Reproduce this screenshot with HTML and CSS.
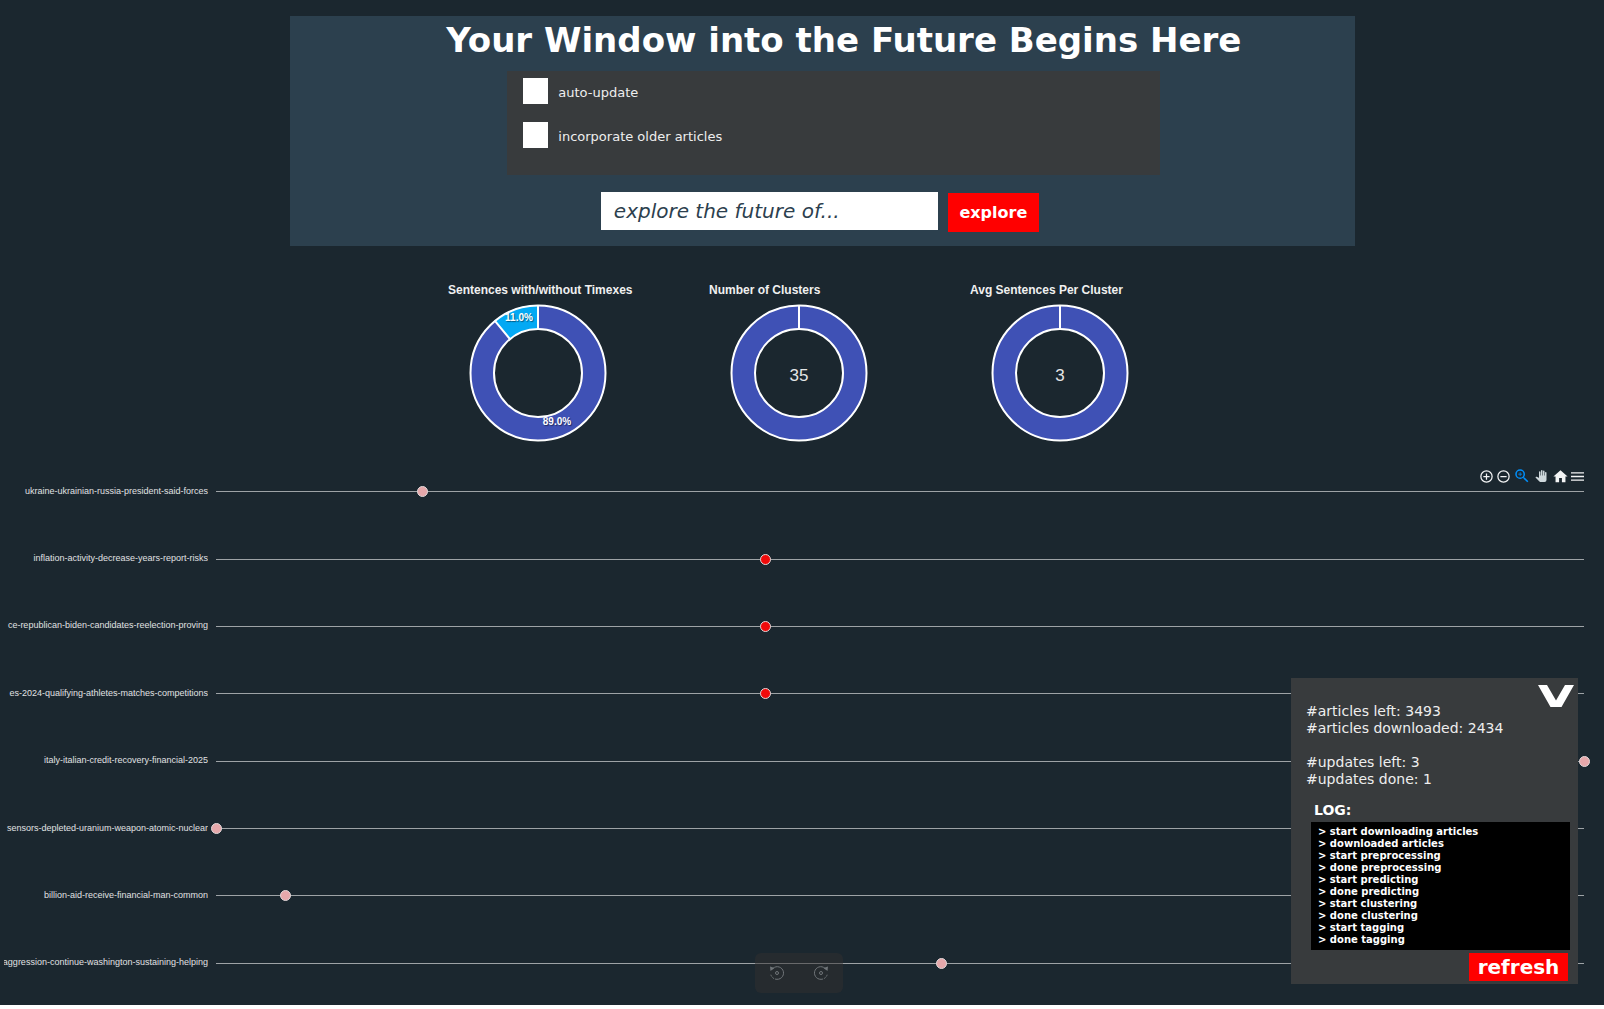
FILE: index.html
```
<!DOCTYPE html>
<html lang="en">
<head>
<meta charset="utf-8">
<title>Future Explorer</title>
<link rel="stylesheet" href="styles.css">
</head>
<body>
<div class="page">
<header class="hero">
  <h1 class="hero-title">Your Window into the Future Begins Here</h1>
  <div class="options">
    <label class="option"><input class="option-box" type="checkbox"><span>auto-update</span></label>
    <label class="option"><input class="option-box" type="checkbox"><span>incorporate older articles</span></label>
  </div>
  <form class="search">
    <input class="search-input" type="text" placeholder="explore the future of..." aria-label="explore the future of">
    <button class="search-button" type="button">explore</button>
  </form>
</header>

<main>
  <section class="stats">
    <figure class="stat">
      <figcaption class="stat-title">Sentences with/without Timexes</figcaption>
      <svg class="donut" viewBox="0 0 180 140">
        <circle class="ring" cx="90" cy="70" r="56"/>
        <path class="slice" d="M90 70 L46.7 17.6 A68 68 0 0 1 90 2 Z"/>
        <circle class="edge" cx="90" cy="70" r="67.500"/>
        <circle class="hole" cx="90" cy="70" r="44"/>
        <path class="cut" d="M90 26V2M61.9 36L46.7 17.6"/>
        <text class="pct" x="71" y="18">11.0%</text>
        <text class="pct" x="109" y="122">89.0%</text>
      </svg>
    </figure>
    <figure class="stat">
      <figcaption class="stat-title">Number of Clusters</figcaption>
      <svg class="donut" viewBox="0 0 180 140">
        <circle class="ring" cx="90" cy="70" r="56"/>
        <circle class="edge" cx="90" cy="70" r="67.500"/>
        <circle class="hole" cx="90" cy="70" r="44"/>
        <path class="cut" d="M90 26V2"/>
        <text class="total" x="90" y="78">35</text>
      </svg>
    </figure>
    <figure class="stat">
      <figcaption class="stat-title">Avg Sentences Per Cluster</figcaption>
      <svg class="donut" viewBox="0 0 180 140">
        <circle class="ring" cx="90" cy="70" r="56"/>
        <circle class="edge" cx="90" cy="70" r="67.500"/>
        <circle class="hole" cx="90" cy="70" r="44"/>
        <path class="cut" d="M90 26V2"/>
        <text class="total" x="90" y="78">3</text>
      </svg>
    </figure>
  </section>

  <section class="timeline">
    <div class="toolbar">
      <button class="tool tool-round" type="button" aria-label="Zoom in"><svg viewBox="0 0 24 24"><path d="M13 7h-2v4H7v2h4v4h2v-4h4v-2h-4V7zm-1-5a10 10 0 1 0 0 20 10 10 0 0 0 0-20zm0 18a8 8 0 1 1 0-16 8 8 0 0 1 0 16z"/></svg></button>
      <button class="tool tool-round" type="button" aria-label="Zoom out"><svg viewBox="0 0 24 24"><path d="M7 11v2h10v-2H7zm5-9a10 10 0 1 0 0 20 10 10 0 0 0 0-20zm0 18a8 8 0 1 1 0-16 8 8 0 0 1 0 16z"/></svg></button>
      <button class="tool tool-active" type="button" aria-label="Selection zoom"><svg viewBox="0 0 24 24"><path d="M15.500 14h-.79l-.28-.27A6.470 6.470 0 0 0 16 9.500 6.500 6.500 0 1 0 9.500 16c1.610 0 3.090-.59 4.230-1.570l.27.28v.79l5 4.990L20.490 19l-4.990-5zm-6 0a4.500 4.500 0 1 1 0-9 4.500 4.500 0 0 1 0 9zM12 10h-2v2H9v-2H7V9h2V7h1v2h2v1z"/></svg></button>
      <button class="tool tool-pan" type="button" aria-label="Panning"><svg viewBox="0 0 24 24"><path d="M23 5.500V20a4 4 0 0 1-4 4h-7.300a4 4 0 0 1-2.850-1.190L1 14.830s1.260-1.230 1.300-1.250c.22-.19.49-.29.79-.29.220 0 .42.060.6.160.040.010 4.310 2.460 4.310 2.460V4a1.500 1.500 0 0 1 3 0v7h1V1.500a1.500 1.500 0 0 1 3 0V11h1V2.500a1.500 1.500 0 0 1 3 0V11h1V5.500a1.500 1.500 0 0 1 3 0z"/></svg></button>
      <button class="tool tool-home" type="button" aria-label="Reset zoom"><svg viewBox="0 0 24 24"><path d="M10 20v-6h4v6h5v-8h3L12 3 2 12h3v8z"/></svg></button>
      <button class="tool tool-menu" type="button" aria-label="Menu"><svg viewBox="3 3 18 18"><path d="M3 18h18v-2H3v2zm0-5h18v-2H3v2zm0-7v2h18V6H3z"/></svg></button>
    </div>
    <ul class="rows">
      <li class="row"><span class="label">ukraine-ukrainian-russia-president-said-forces</span><span class="track"><i class="dot" style="left:15.050%"></i></span></li>
      <li class="row"><span class="label">inflation-activity-decrease-years-report-risks</span><span class="track"><i class="dot dot-hot" style="left:40.100%"></i></span></li>
      <li class="row"><span class="label">ce-republican-biden-candidates-reelection-proving</span><span class="track"><i class="dot dot-hot" style="left:40.100%"></i></span></li>
      <li class="row"><span class="label">es-2024-qualifying-athletes-matches-competitions</span><span class="track"><i class="dot dot-hot" style="left:40.100%"></i></span></li>
      <li class="row"><span class="label">italy-italian-credit-recovery-financial-2025</span><span class="track"><i class="dot" style="left:100%"></i></span></li>
      <li class="row"><span class="label">sensors-depleted-uranium-weapon-atomic-nuclear</span><span class="track"><i class="dot" style="left:0%"></i></span></li>
      <li class="row"><span class="label">billion-aid-receive-financial-man-common</span><span class="track"><i class="dot" style="left:5.080%"></i></span></li>
      <li class="row"><span class="label">aggression-continue-washington-sustaining-helping</span><span class="track"><i class="dot" style="left:53.030%"></i></span></li>
    </ul>
  </section>
</main>
</div>

<div class="rotate-bar">
  <button class="rotate" type="button" aria-label="Rotate left"><svg viewBox="0 0 16 16"><path class="arc" d="M3 4.500A6.300 6.300 0 1 1 8 14.300"/><path class="arc dashes" d="M8 14.300A6.300 6.300 0 0 1 1.700 9"/><circle class="arc" cx="8" cy="8" r="1.500"/><path class="head" d="M1 1.500L5.500 3 1.500 6z"/></svg></button>
  <button class="rotate" type="button" aria-label="Rotate right"><svg viewBox="0 0 16 16"><path class="arc" d="M13 4.500A6.300 6.300 0 1 0 8 14.300"/><path class="arc dashes" d="M8 14.300A6.300 6.300 0 0 0 14.300 9"/><circle class="arc" cx="8" cy="8" r="1.500"/><path class="head" d="M15 1.500L10.500 3 14.500 6z"/></svg></button>
</div>

<aside class="panel">
  <button class="collapse" type="button" aria-label="Collapse"><svg viewBox="0 0 36 22"><path d="M0 0H9L18 15.500 27 0H36L23.500 22H12.500z"/></svg></button>
  <p class="counts">#articles left: 3493<br>#articles downloaded: 2434</p>
  <p class="counts">#updates left: 3<br>#updates done: 1</p>
  <h2 class="log-title">LOG:</h2>
  <ul class="log">
    <li>&gt; start downloading articles</li>
    <li>&gt; downloaded articles</li>
    <li>&gt; start preprocessing</li>
    <li>&gt; done preprocessing</li>
    <li>&gt; start predicting</li>
    <li>&gt; done predicting</li>
    <li>&gt; start clustering</li>
    <li>&gt; done clustering</li>
    <li>&gt; start tagging</li>
    <li>&gt; done tagging</li>
  </ul>
  <button class="refresh" type="button">refresh</button>
</aside>
</body>
</html>
```
FILE: styles.css
```
* { box-sizing: border-box; }

html { background: #fff; }

body {
  margin: 0;
  color: #fff;
  font-family: "DejaVu Sans", sans-serif;
}

.page {
  min-height: calc(100vh - 4px);
  padding-top: 16px;
  background: #1b272f;
}

button { border: 0; padding: 0; cursor: pointer; font-family: inherit; }

/* Search header */
.hero {
  display: flex;
  flex-direction: column;
  align-items: center;
  width: 66.400%;
  height: 230px;
  margin-left: 18.100%;
  padding-left: 42px;
  background: #2c404e;
}
.hero-title { margin: 0; font-size: 34px; line-height: 48px; white-space: nowrap; }
.options {
  display: flex;
  flex-direction: column;
  gap: 18px;
  align-self: stretch;
  margin: 7px 195px 0 175px;
  height: 104px;
  padding: 7px 16px;
  background: #383b3d;
}
.option { display: flex; align-items: center; gap: 10px; height: 26px; font-size: 13px; color: #eee; }
.option span { padding-top: 3px; }
.option-box { appearance: none; width: 25px; height: 26px; margin: 0; background: #fff; }
.search { display: flex; align-items: center; gap: 10px; margin-top: 14px; margin-right: 48px; }
.search-input {
  width: 337px;
  height: 38px;
  padding: 0 13px;
  border: 0;
  border-radius: 0;
  background: #fff;
  color: #2c404e;
  font: italic 20px "DejaVu Sans", sans-serif;
}
.search-input::placeholder { color: #2c404e; opacity: 1; }
.search-button {
  width: 91px;
  height: 39px;
  margin-top: 4px;
  background: #f00;
  color: #fff;
  font-size: 16px;
  font-weight: bold;
}

/* Donut charts */
.stats { display: flex; justify-content: center; gap: 81px; padding: 36px 6px 0 0; }
.stat { width: 180px; margin: 0; }
.stat-title {
  height: 21px;
  font: bold 12px/16px "Liberation Sans", Arial, sans-serif;
  white-space: nowrap;
  color: #f0f0f0;
}
.donut { display: block; width: 180px; height: 140px; overflow: visible; font-family: "Liberation Sans", Arial, sans-serif; }
.ring { fill: none; stroke: #3f51b5; stroke-width: 24px; }
.slice { fill: #03a9f4; }
.edge { fill: none; stroke: #fff; stroke-width: 2px; }
.hole { fill: #1b272f; stroke: #fff; stroke-width: 2px; }
.cut { fill: none; stroke: #fff; stroke-width: 2px; }
.pct { fill: #fff; font-size: 10px; font-weight: bold; text-anchor: middle; text-shadow: 1px 1px 1px rgba(0, 0, 0, .45); }
.total { fill: #e4e6e7; font-size: 17px; text-anchor: middle; }

/* Timeline */
.timeline { position: relative; padding: 15px 20px 0 4px; }
.toolbar { position: absolute; top: 23px; right: 19px; display: flex; height: 20px; align-items: center; }
.tool {
  display: flex;
  justify-content: center;
  align-items: center;
  width: 20px;
  height: 20px;
  background: none;
  color: #f3f4f5;
}
.tool svg { flex: none; width: 17px; height: 17px; fill: currentColor; }
.tool-round { width: 17px; }
.tool-round svg { width: 15px; height: 15px; }
.tool-active { color: #008ffb; }
.tool-active svg { width: 18px; height: 18px; }
.tool-pan { width: 18px; color: #cfd8dc; }
.tool-pan svg { width: 12px; height: 12px; }
.tool-menu { width: 15px; }
.tool-menu svg { width: 13px; height: 13px; }
.rows { margin: 0; padding: 0; list-style: none; }
.row {
  display: grid;
  grid-template-columns: 204px 1fr;
  column-gap: 8px;
  align-items: center;
  height: calc((100vh - 470px) / 8);
}
.label {
  display: flex;
  justify-content: flex-end;
  overflow: hidden;
  padding-bottom: 2px;
  font: 9px/12px "Liberation Sans", Arial, sans-serif;
  white-space: nowrap;
  color: #e0e2e3;
}
.track { position: relative; height: 1px; background: #9ea3a6; }
.dot {
  position: absolute;
  top: -5px;
  width: 11px;
  height: 11px;
  margin-left: -5px;
  border: 1px solid #e2d9da;
  border-radius: 50%;
  background: #e6a8ab;
}
.dot-hot { background: #f00a0a; }

/* Rotation controls floating over the chart */
.rotate-bar {
  position: fixed;
  bottom: 16px;
  left: calc(50% - 47px);
  display: flex;
  justify-content: space-around;
  align-items: center;
  width: 88px;
  height: 40px;
  border-radius: 6px;
  background: rgba(50, 47, 47, .5);
}
.rotate { width: 16px; height: 16px; background: none; }
.rotate svg { display: block; width: 16px; height: 16px; }
.arc { fill: none; stroke: #707579; stroke-width: 1px; }
.dashes { stroke-dasharray: 2 1; }
.head { fill: #707579; }

/* Status panel */
.panel {
  position: fixed;
  right: 26px;
  bottom: 25px;
  width: 287px;
  height: 306px;
  padding: 25px 8px 0 15px;
  background: #383b3d;
}
.collapse { position: absolute; top: 7px; right: 4px; background: none; }
.collapse svg { display: block; width: 36px; height: 22px; fill: #fff; }
.counts { margin: 0 0 17px; font-size: 14px; line-height: 17px; color: #eee; }
.counts + .counts { margin-bottom: 13px; }
.log-title { margin: 0 0 3px 8px; font-size: 14px; line-height: 18px; }
.log {
  margin: 0 0 3px 5px;
  padding: 4px 7px;
  background: #000;
  list-style: none;
  font-size: 10px;
  font-weight: bold;
  line-height: 12px;
}
.refresh {
  display: block;
  width: 99px;
  height: 28px;
  margin-left: auto;
  margin-right: 2px;
  background: #f00;
  color: #fff;
  font-size: 20px;
  font-weight: bold;
}
```
